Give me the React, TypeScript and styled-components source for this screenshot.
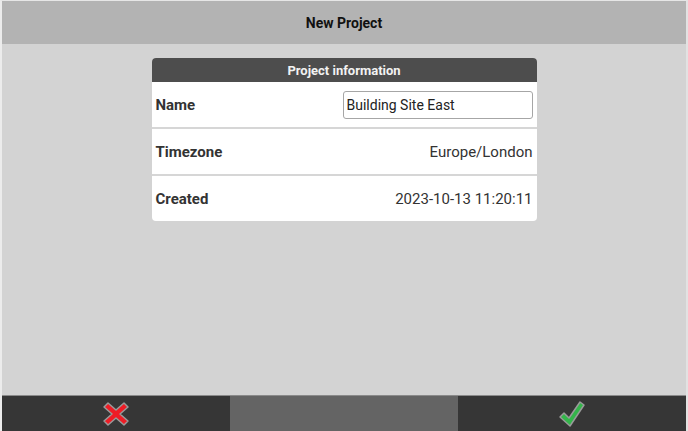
import styled, { createGlobalStyle } from "styled-components";

const GlobalStyle = createGlobalStyle`
  html, body {
    margin: 0;
    padding: 0;
    height: 100%;
  }
  body {
    font-family: Roboto, "Liberation Sans", sans-serif;
    background: #ffffff;
  }
  #root {
    height: 100%;
  }
`;

const Screen = styled.div`
  box-sizing: border-box;
  height: 431px;
  width: 688px;
  display: flex;
  flex-direction: column;
  border-left: 2px solid #ececec;
  border-right: 2px solid #e2e2e2;
  border-top: 1px solid #e6e6e6;
  overflow: hidden;
`;

const TitleBar = styled.header`
  height: 43px;
  background: #b3b3b3;
  display: flex;
  align-items: center;
  justify-content: center;
  font-weight: 700;
  font-size: 14px;
  color: #111;
`;

const Body = styled.main`
  flex: 1;
  background: #d3d3d3;
  display: flex;
  justify-content: center;
  align-items: flex-start;
  padding-top: 14px;
`;

const Card = styled.section`
  width: 385px;
  background: #fff;
  border-radius: 4px;
  overflow: hidden;
`;

const CardHeader = styled.div`
  height: 24px;
  background: #4d4d4d;
  color: #f2f2f2;
  font-weight: 700;
  font-size: 13px;
  display: flex;
  align-items: center;
  justify-content: center;
`;

const Row = styled.div<{ $last?: boolean }>`
  height: 45px;
  display: flex;
  align-items: center;
  justify-content: space-between;
  padding: 0 4px;
  border-bottom: ${(p) => (p.$last ? "none" : "2px solid #d6d6d6")};
  box-sizing: content-box;
`;

const Label = styled.span`
  font-weight: 700;
  font-size: 15px;
  color: #333;
`;

const Value = styled.span`
  font-size: 15px;
  color: #333;
`;

const TextInput = styled.input`
  box-sizing: border-box;
  width: 190px;
  height: 28px;
  border: 1px solid #a6a6a6;
  border-radius: 3px;
  padding: 0 3px;
  font-family: Roboto, "Liberation Sans", sans-serif;
  font-size: 14px;
  color: #222;
  outline: none;
`;

const BottomBar = styled.footer`
  height: 35px;
  border-top: 1px solid #8a8a8a;
  display: grid;
  grid-template-columns: 1fr 1fr 1fr;
  background: #363636;
`;

const BarButton = styled.button<{ $muted?: boolean }>`
  border: none;
  margin: 0;
  padding: 0;
  background: ${(p) => (p.$muted ? "#646464" : "#363636")};
  display: flex;
  align-items: center;
  justify-content: center;
  cursor: pointer;
`;

function CrossIcon() {
  return (
    <svg width="28" height="28" viewBox="0 0 28 28">
      <path
        d="M6 3 L14 10 L22 3 L26 7 L18 14 L26 21 L22 25 L14 18 L6 25 L2 21 L10 14 L2 7 Z"
        fill="#ee1c25"
        stroke="#9a9a9a"
        strokeWidth="1.5"
        strokeLinejoin="round"
      />
    </svg>
  );
}

function CheckIcon() {
  return (
    <svg width="30" height="30" viewBox="0 0 30 30">
      <path
        d="M3 18 L7 14 L12 19 L23 3 L27 6 L13 27 Z"
        fill="#33b54a"
        stroke="#9a9a9a"
        strokeWidth="1.5"
        strokeLinejoin="round"
      />
    </svg>
  );
}

export default function App() {
  return (
    <>
      <GlobalStyle />
      <Screen>
        <TitleBar>New Project</TitleBar>
        <Body>
          <Card>
            <CardHeader>Project information</CardHeader>
            <Row>
              <Label>Name</Label>
              <TextInput defaultValue="Building Site East" />
            </Row>
            <Row>
              <Label>Timezone</Label>
              <Value>Europe/London</Value>
            </Row>
            <Row $last>
              <Label>Created</Label>
              <Value>2023-10-13 11:20:11</Value>
            </Row>
          </Card>
        </Body>
        <BottomBar>
          <BarButton>
            <CrossIcon />
          </BarButton>
          <BarButton $muted />
          <BarButton>
            <CheckIcon />
          </BarButton>
        </BottomBar>
      </Screen>
    </>
  );
}
